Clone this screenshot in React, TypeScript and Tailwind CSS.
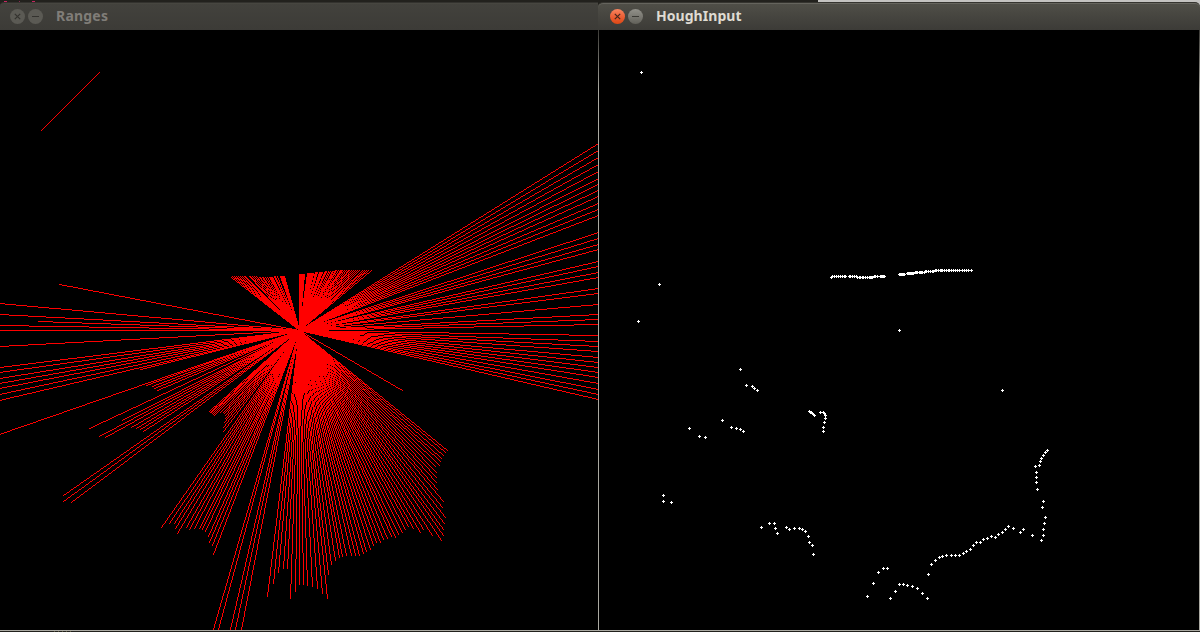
import React from "react";

type Point = [number, number];

const CENTER: Point = [299, 300];

/* Scan returns inside the sensor frame, in canvas coordinates. */
const NEAR: Point[] = [
  [231, 247], [232, 246], [234, 246], [236, 246], [238, 246], [240, 246], [242, 246], [244, 246], [245, 246],
  [249, 246], [250, 246], [252, 246], [254, 246], [256, 246], [257, 247], [259, 247], [260, 247], [262, 247],
  [263, 247], [265, 247], [267, 247], [269, 247], [270, 247], [271, 247], [272, 247], [274, 246], [275, 246],
  [277, 246], [280, 246], [281, 246], [282, 246], [283, 246], [284, 246],
  [299, 244], [300, 244], [301, 244], [302, 244], [303, 244], [304, 244], [307, 243], [308, 243], [309, 243],
  [310, 243], [311, 243], [312, 243], [313, 243], [315, 242], [316, 242], [317, 242], [319, 242], [320, 242],
  [321, 242], [322, 242], [324, 242], [325, 241], [326, 241], [328, 241], [330, 241], [332, 241], [333, 241],
  [335, 240], [336, 240], [338, 240], [340, 240], [341, 240], [342, 240], [344, 240], [346, 240], [348, 240],
  [349, 240], [351, 240], [353, 240], [355, 240], [357, 240], [359, 240], [362, 240], [364, 240], [366, 240],
  [368, 240], [371, 240],
  [59, 254], [38, 291], [402, 360],
  [140, 339], [146, 355], [152, 356], [154, 358], [157, 360], [122, 390], [131, 397], [136, 398], [140, 399],
  [143, 401], [89, 398], [99, 406], [105, 407], [63, 465], [63, 471], [71, 472],
  [209, 381], [210, 382], [211, 382], [212, 383], [213, 384], [214, 385], [220, 382], [223, 382], [224, 383],
  [225, 385], [225, 388], [224, 392], [223, 397], [223, 401],
  [161, 497], [169, 493], [174, 493], [175, 498], [177, 503], [186, 497], [189, 499], [194, 498], [199, 498],
  [202, 499], [205, 501], [208, 506], [209, 512], [212, 515], [213, 524],
  [447, 420], [445, 422], [443, 425], [441, 428], [440, 431], [439, 435], [435, 436], [436, 442], [436, 447],
  [436, 452], [437, 459], [443, 471], [442, 477], [445, 487], [444, 493], [443, 499], [443, 505], [441, 510],
  [432, 505], [423, 499], [420, 502], [413, 498], [408, 496], [405, 499], [402, 502], [398, 504], [395, 507],
  [391, 506], [387, 508], [383, 509], [380, 512], [376, 512], [373, 515], [370, 519], [366, 521], [363, 523],
  [359, 525], [355, 525], [351, 525], [346, 525], [342, 526], [339, 527], [335, 530], [331, 534], [328, 544],
  [327, 568], [322, 563], [317, 558], [312, 556], [307, 555], [303, 554], [299, 554], [295, 561], [290, 568],
  [287, 538], [283, 538], [278, 542], [273, 553], [267, 566],
];

/* Rays that leave the frame, by the coordinate at which they cross its edge. */
const RIGHT_EXITS = [
  113, 120, 127, 134, 141, 148, 154, 160, 166, 173, 179, 185, 202, 208, 214, 219, 231, 236, 242, 247, 258, 263, 274,
  284, 289, 294, 305, 311, 316, 321, 327, 332, 337, 342, 347, 353, 359, 364, 369,
];
const LEFT_EXITS = [273, 284, 295, 300, 316, 337, 342, 348, 353, 358, 364, 370, 404];
const BOTTOM_EXITS = [213, 218, 230, 235, 241];

const RAYS: Point[] = [
  ...NEAR,
  ...RIGHT_EXITS.map((y): Point => [598, y]),
  ...LEFT_EXITS.map((y): Point => [-1, y]),
  ...BOTTOM_EXITS.map((x): Point => [x, 599]),
];

/* Rasterises a segment into runs of whole pixels, without antialiasing. */
function pixelLine([x0, y0]: Point, [x1, y1]: Point): string {
  const dx = x1 - x0;
  const dy = y1 - y0;
  const steep = Math.abs(dy) > Math.abs(dx);
  const n = Math.max(Math.abs(dx), Math.abs(dy));
  const major = steep ? Math.sign(dy) : Math.sign(dx);
  const minor = steep ? dx : dy;
  let out = "";
  let start = 0;
  const at = (i: number) => Math.sign(minor) * Math.ceil((Math.abs(minor) * i) / n - 0.5);
  for (let i = 1; i <= n + 1; i++) {
    if (i <= n && at(i) === at(start)) continue;
    const len = i - start;
    const from = Math.min(major * start, major * (i - 1));
    out += steep
      ? `M${x0 + at(start)} ${y0 + from}h1v${len}h-1z`
      : `M${x0 + from} ${y0 + at(start)}h${len}v1h-${len}z`;
    start = i;
  }
  return out;
}

const rayPath = RAYS.map((p) => pixelLine(CENTER, p)).join("");
const strayPath = pixelLine([41, 100], [99, 42]);
const dotPath = [...NEAR, CENTER, [41, 42] as Point]
  .map(([x, y]) => `M${x} ${y - 1}h1v3h-1zM${x - 1} ${y}h3v1h-3z`)
  .join("");

function WindowButton({ kind, active }: { kind: "close" | "minimize"; active: boolean }) {
  const close = kind === "close";
  const fill = !active ? "#5b5a54" : close ? "url(#closeFill)" : "url(#minFill)";
  const mark = !active ? "#34332f" : close ? "#47271c" : "#3b3a35";
  return (
    <svg width="15" height="15" viewBox="0 0 15 15" className="shrink-0">
      <defs>
        <linearGradient id="closeFill" x1="0" y1="0" x2="0" y2="1">
          <stop offset="0" stopColor="#f98660" />
          <stop offset="0.5" stopColor="#ec6037" />
          <stop offset="1" stopColor="#dd4814" />
        </linearGradient>
        <linearGradient id="minFill" x1="0" y1="0" x2="0" y2="1">
          <stop offset="0" stopColor="#92918a" />
          <stop offset="1" stopColor="#62615a" />
        </linearGradient>
      </defs>
      <circle cx="7.5" cy="7.5" r="7.5" fill={fill} />
      {close ? (
        <path d="M4.8 4.8l5.4 5.4M10.2 4.8l-5.4 5.4" stroke={mark} strokeWidth="1.2" />
      ) : (
        <path d="M4 7.5h7" stroke={mark} strokeWidth="1" />
      )}
    </svg>
  );
}

function TitleBar({ title, active }: { title: string; active: boolean }) {
  return (
    <header
      className={
        active
          ? "flex h-7 shrink-0 items-center rounded-t-[5px] border-t border-[#35342f] bg-linear-to-b from-[#504f48] to-[#3c3b37] pl-[12px] shadow-[inset_0_1px_0_#65645d]"
          : "flex h-7 shrink-0 items-center rounded-tl-[4px] border-t border-[#33322e] bg-linear-to-b from-[#43423d] to-[#3c3b37] pl-[10px] shadow-[inset_0_1px_0_#474640]"
      }
    >
      <div className="flex gap-[3px]">
        <WindowButton kind="close" active={active} />
        <WindowButton kind="minimize" active={active} />
      </div>
      <span
        className={
          active
            ? "ml-[13px] pb-[2px] text-[14px] leading-none font-bold tracking-[0.05px] text-[#dfdbd2]"
            : "ml-[13px] pb-[2px] text-[14px] leading-none font-bold tracking-[0.2px] text-[#807d78]"
        }
      >
        {title}
      </span>
    </header>
  );
}

export default function App() {
  return (
    <div className="flex h-[632px] w-[1200px] flex-col overflow-hidden bg-[#22211d] font-['Noto_Sans',sans-serif]">
      <div className="flex h-[2px] shrink-0 justify-between">
        <div className="mt-px flex h-px pl-1">
          <i className="w-[3px] bg-[#c5265f]" />
          <i className="ml-3 w-px bg-[#8b2450]" />
          <i className="ml-3 w-[3px] bg-[#c5265f]" />
        </div>
        <div className="w-[382px] bg-[#c3c2c0]" />
      </div>
      <main className="flex h-[628px] shrink-0">
        <section className="flex w-[598px] flex-col">
          <TitleBar title="Ranges" active={false} />
          <svg width="598" height="600" viewBox="0 0 598 600" shapeRendering="crispEdges" className="block bg-black">
            <path d={rayPath} fill="#ff0000" />
            <path d={strayPath} fill="#ff0000" />
          </svg>
        </section>
        <section className="flex w-[602px] flex-col bg-linear-to-r from-[#22211d] from-50% to-[#c3c2c0] to-50%">
          <TitleBar title="HoughInput" active />
          <div className="flex">
            <div className="h-[600px] w-px bg-linear-to-b from-[#3c3b37] to-[#aaa9a2] to-[60px]" />
            <svg width="600" height="600" viewBox="-1 0 600 600" shapeRendering="crispEdges" className="block bg-black">
              <path d={dotPath} fill="#ffffff" />
            </svg>
            <div className="h-[600px] w-px bg-linear-to-b from-[#3c3b37] to-[#aaa9a2] to-[60px]" />
          </div>
        </section>
      </main>
      <div className="h-px shrink-0 bg-[#aaa9a2]" />
      <div className="flex h-px shrink-0 gap-[3px] pl-[54px]">
        <i className="w-px bg-[#55543c]" />
        <i className="w-px bg-[#55543c]" />
        <i className="w-px bg-[#55543c]" />
        <i className="w-px bg-[#55543c]" />
        <i className="w-px bg-[#55543c]" />
      </div>
    </div>
  );
}
